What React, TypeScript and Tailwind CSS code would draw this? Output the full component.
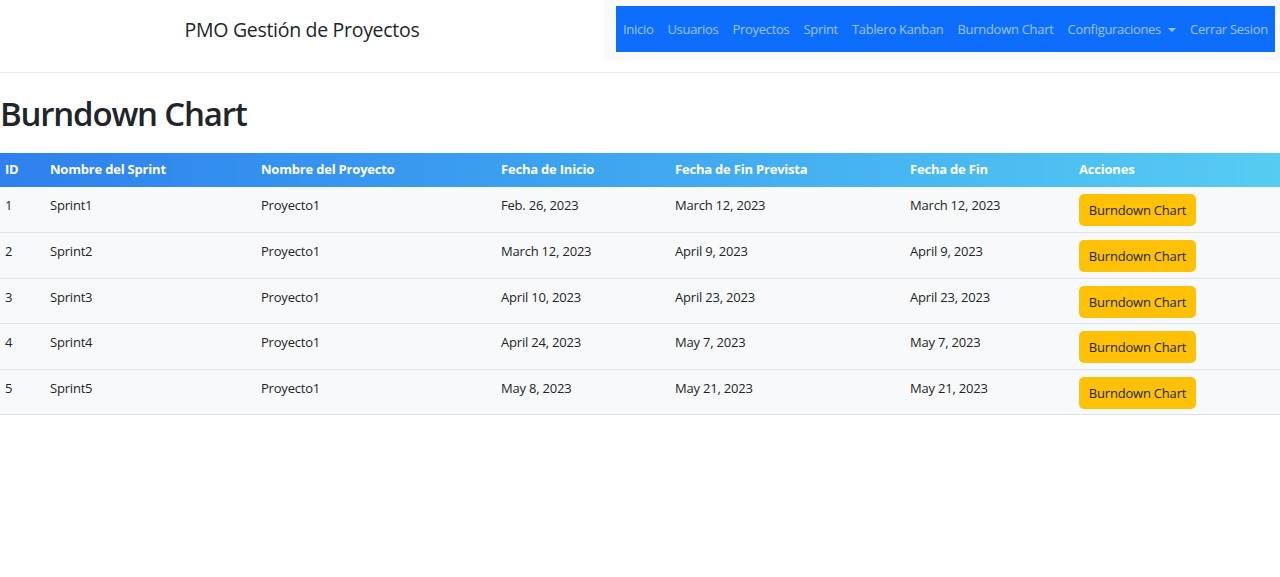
const links = [
  "Inicio",
  "Usuarios",
  "Proyectos",
  "Sprint",
  "Tablero Kanban",
  "Burndown Chart",
];

const sprints = [
  { id: 1, name: "Sprint1", start: "Feb. 26, 2023", planned: "March 12, 2023", end: "March 12, 2023" },
  { id: 2, name: "Sprint2", start: "March 12, 2023", planned: "April 9, 2023", end: "April 9, 2023" },
  { id: 3, name: "Sprint3", start: "April 10, 2023", planned: "April 23, 2023", end: "April 23, 2023" },
  { id: 4, name: "Sprint4", start: "April 24, 2023", planned: "May 7, 2023", end: "May 7, 2023" },
  { id: 5, name: "Sprint5", start: "May 8, 2023", planned: "May 21, 2023", end: "May 21, 2023" },
];

const cols = ["w-[45px]", "w-[211px]", "w-[240px]", "w-[174px]", "w-[235px]", "w-[169px]", "w-[206px]"];

export default function App() {
  return (
    <div className="min-h-[577px] bg-white text-[#212529] font-['Open_Sans',sans-serif]">
      {/* header */}
      <header className="flex h-[73px] border-b border-[#e9ecef]">
        <div className="w-[604px] flex items-center justify-center pb-[12px] text-[19.5px] tracking-[-0.3px]">
          PMO Gestión de Proyectos
        </div>
        <div className="flex-1 h-[60px] bg-[#f8f9fa] pl-[12px] pr-[5px] pt-[6px]">
          <nav className="h-[46px] bg-[#0d6efd] flex items-center pl-[7px] pt-[1px] text-[13px] tracking-[-0.3px] text-white/60">
            {links.map((l) => (
              <span key={l} className="mr-[14px]">{l}</span>
            ))}
            <span className="flex items-center mr-[14px]">
              Configuraciones
              <span className="ml-[7px] border-x-[4px] border-x-transparent border-t-[4px] border-t-white/60" />
            </span>
            <span>Cerrar Sesion</span>
          </nav>
        </div>
      </header>

      <h1 className="mt-[17px] mb-[15px] text-[33px] leading-[48px] font-semibold tracking-[-1.2px]">
        Burndown Chart
      </h1>

      <table className="w-full border-collapse text-[13px] tracking-[-0.2px]">
        <thead>
          <tr className="h-[34px] bg-gradient-to-r from-[#2f80ed] to-[#56ccf2] text-white font-bold text-left">
            {["ID", "Nombre del Sprint", "Nombre del Proyecto", "Fecha de Inicio", "Fecha de Fin Prevista", "Fecha de Fin", "Acciones"].map((h, i) => (
              <th key={h} className={`${cols[i]} pl-[5px] font-bold`}>{h}</th>
            ))}
          </tr>
        </thead>
        <tbody>
          {sprints.map((s) => (
            <tr key={s.id} className="h-[45.5px] bg-[#f8f9fa] border-b border-[#dee2e6] align-top">
              <td className="pl-[5px] pt-[9px]">{s.id}</td>
              <td className="pl-[5px] pt-[9px]">{s.name}</td>
              <td className="pl-[5px] pt-[9px]">Proyecto1</td>
              <td className="pl-[5px] pt-[9px]">{s.start}</td>
              <td className="pl-[5px] pt-[9px]">{s.planned}</td>
              <td className="pl-[5px] pt-[9px]">{s.end}</td>
              <td className="pl-[5px] pt-[7px]">
                <button className="h-[32px] w-[117px] rounded-[5px] bg-[#ffc107] pt-[2px] text-[13px] text-[#212529]">
                  Burndown Chart
                </button>
              </td>
            </tr>
          ))}
        </tbody>
      </table>
    </div>
  );
}
